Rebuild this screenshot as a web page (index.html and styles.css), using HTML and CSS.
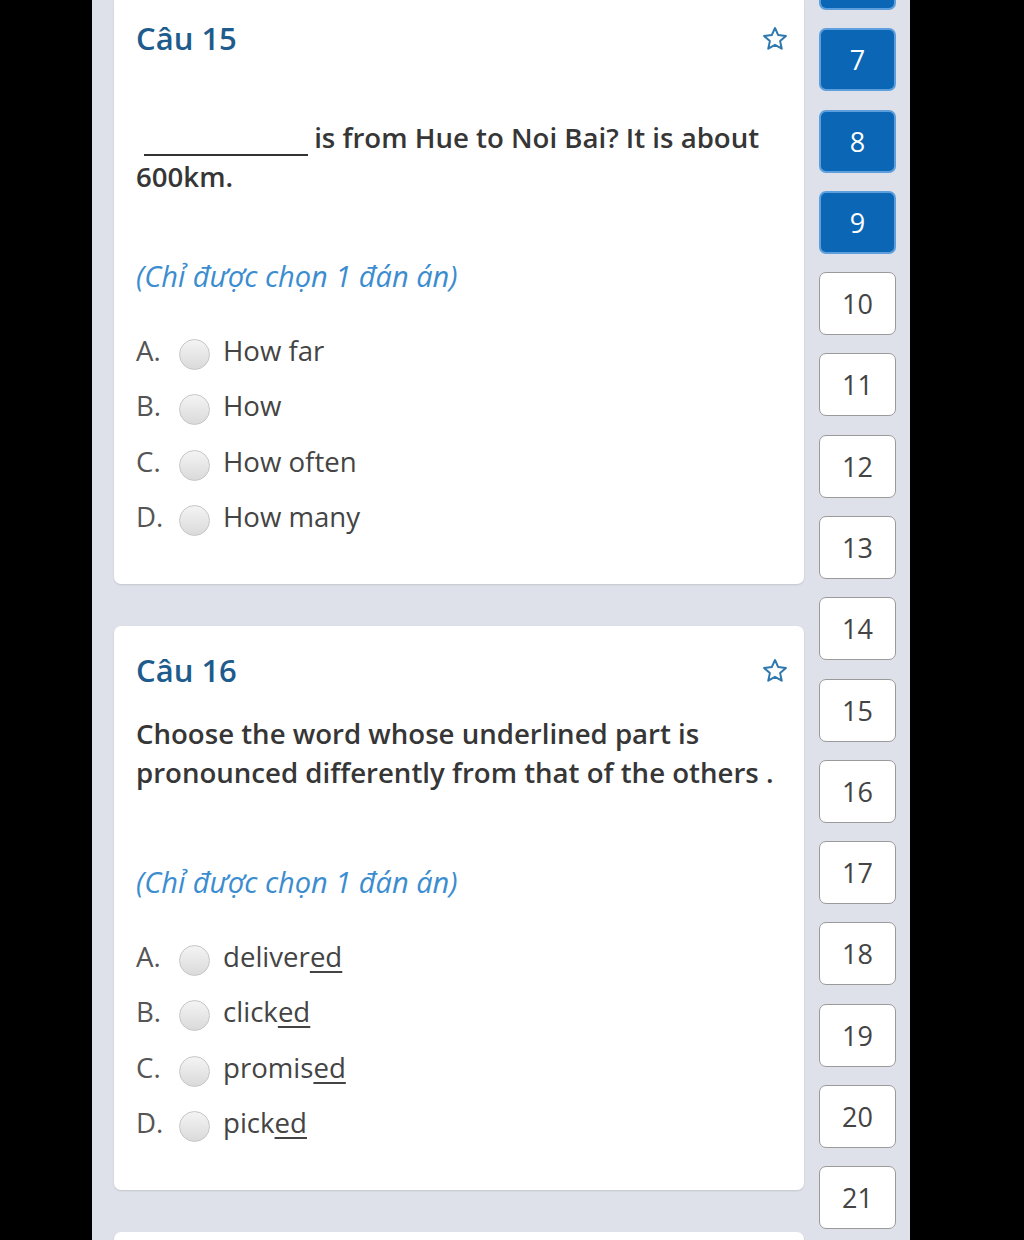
FILE: index.html
```html
<!DOCTYPE html>
<html lang="vi">
<head>
<meta charset="utf-8">
<title>Quiz</title>
<link rel="stylesheet" href="styles.css">
</head>
<body>
<div class="frame">
  <div class="screen">
    <main class="questions">
      <section class="card card-first">
        <div class="card-head">
          <h2 class="title">Câu 15</h2>
          <svg class="star" viewBox="0 0 24 24" width="28" height="28"><path d="M12 2.6l2.75 6.05 6.6.7-4.95 4.45 1.4 6.5L12 16.95 6.2 20.3l1.4-6.5L2.65 9.35l6.6-.7z" fill="none" stroke="#2f78ad" stroke-width="1.7" stroke-linejoin="round"/></svg>
        </div>
        <p class="question q-gap-large"><span class="blank"></span> is from Hue to Noi Bai? It is about 600km.</p>
        <p class="hint hint-gap-a">(Chỉ được chọn 1 đán án)</p>
        <ul class="options">
          <li class="option"><span class="letter">A.</span><span class="radio"></span><span class="answer">How far</span></li>
          <li class="option"><span class="letter">B.</span><span class="radio"></span><span class="answer">How</span></li>
          <li class="option"><span class="letter">C.</span><span class="radio"></span><span class="answer">How often</span></li>
          <li class="option"><span class="letter">D.</span><span class="radio"></span><span class="answer">How many</span></li>
        </ul>
      </section>
      <section class="card">
        <div class="card-head">
          <h2 class="title">Câu 16</h2>
          <svg class="star" viewBox="0 0 24 24" width="28" height="28"><path d="M12 2.6l2.75 6.05 6.6.7-4.95 4.45 1.4 6.5L12 16.95 6.2 20.3l1.4-6.5L2.65 9.35l6.6-.7z" fill="none" stroke="#2f78ad" stroke-width="1.7" stroke-linejoin="round"/></svg>
        </div>
        <p class="question q-gap-small">Choose the word whose underlined part is pronounced differently from that of the others .</p>
        <p class="hint hint-gap-b">(Chỉ được chọn 1 đán án)</p>
        <ul class="options">
          <li class="option"><span class="letter">A.</span><span class="radio"></span><span class="answer">deliver<u>ed</u></span></li>
          <li class="option"><span class="letter">B.</span><span class="radio"></span><span class="answer">click<u>ed</u></span></li>
          <li class="option"><span class="letter">C.</span><span class="radio"></span><span class="answer">promis<u>ed</u></span></li>
          <li class="option"><span class="letter">D.</span><span class="radio"></span><span class="answer">pick<u>ed</u></span></li>
        </ul>
      </section>
      <section class="card card-next"></section>
    </main>
    <nav class="sidebar">
      <a class="num done" aria-label="6"></a>
      <a class="num done">7</a>
      <a class="num done">8</a>
      <a class="num done">9</a>
      <a class="num">10</a>
      <a class="num">11</a>
      <a class="num">12</a>
      <a class="num">13</a>
      <a class="num">14</a>
      <a class="num">15</a>
      <a class="num">16</a>
      <a class="num">17</a>
      <a class="num">18</a>
      <a class="num">19</a>
      <a class="num">20</a>
      <a class="num">21</a>
    </nav>
  </div>
</div>
</body>
</html>
```

FILE: styles.css
```css
* { box-sizing: border-box; }
html, body { margin: 0; padding: 0; background: #000; }
body {
  font-family: "Open Sans", "Noto Sans", sans-serif;
  color: #333;
}
.frame {
  width: 1024px;
  height: 1240px;
  overflow: hidden;
  background: #000;
  padding-left: 92px;
  padding-right: 114px;
}
.screen {
  height: 1240px;
  background: #dee1e9;
  display: flex;
  overflow: hidden;
}
.questions {
  width: 712px;
  padding-left: 22px;
  margin-top: -6px;
  display: flex;
  flex-direction: column;
  gap: 42px;
  flex: none;
}
.card {
  width: 690px;
  background: #fff;
  border-radius: 7px;
  box-shadow: 0 1px 2px rgba(0,0,0,0.12);
  padding: 24px 15px 40px 22px;
  flex: none;
}
.card-next { height: 200px; }
.card-head {
  display: flex;
  justify-content: space-between;
  align-items: center;
  height: 40px;
}
.title {
  margin: 0;
  font-size: 31px;
  line-height: 40px;
  font-weight: 600;
  color: #1d5c8c;
}
.star { flex: none; margin-top: 2px; }
.question {
  margin: 0;
  font-size: 27.6px;
  line-height: 39px;
  font-weight: 600;
  color: #363636;
  padding-right: 6px;
}
.q-gap-large { margin-top: 60px; }
.q-gap-small { margin-top: 24px; }
.blank {
  display: inline-block;
  width: 164px;
  margin-left: 8px;
  margin-right: -1px;
  border-bottom: 2px solid #333;
  vertical-align: baseline;
  height: 1px;
  position: relative;
  top: 8px;
}
.hint {
  margin: 0;
  font-size: 29px;
  line-height: 40px;
  font-style: italic;
  color: #3b8dcf;
}
.hint-gap-a { margin-top: 60px; }
.hint-gap-b { margin-top: 70px; }
.options {
  list-style: none;
  margin: 26px 0 0;
  padding: 0;
}
.option {
  display: flex;
  align-items: center;
  height: 55.5px;
  font-size: 27.6px;
}
.letter {
  width: 43px;
  color: #555;
  flex: none;
}
.radio {
  width: 31px;
  height: 31px;
  border-radius: 50%;
  border: 1px solid #c6c6c6;
  background: linear-gradient(#f4f4f4, #dadada);
  margin-top: 9px;
  margin-right: 13px;
  flex: none;
}
.answer { color: #444; }
.answer u {
  text-decoration-thickness: 2px;
  text-underline-offset: 4px;
}
.sidebar {
  flex: none;
  width: 106px;
  padding-left: 15px;
  margin-top: -53px;
  display: flex;
  flex-direction: column;
  gap: 18.29px;
}
.num {
  width: 77px;
  height: 63px;
  flex: none;
  display: flex;
  align-items: center;
  justify-content: center;
  border: 1.5px solid #9a9a9a;
  border-radius: 7px;
  background: #fff;
  color: #444;
  font-size: 27px;
  text-decoration: none;
}
.num.done {
  background: #0b66b6;
  border: 2px solid #5c9fdc;
  color: #fff;
}
```
